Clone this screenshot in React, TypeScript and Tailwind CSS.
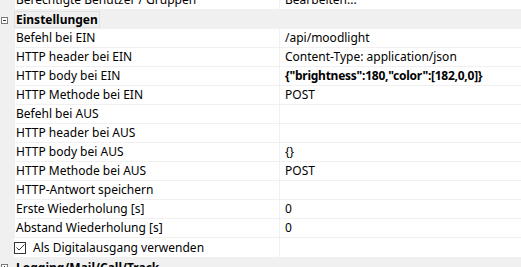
import React from "react";

type Row = { label: string; value?: string; bold?: boolean };

const rows: Row[] = [
  { label: "Befehl bei EIN", value: "/api/moodlight" },
  { label: "HTTP header bei EIN", value: "Content-Type: application/json" },
  { label: "HTTP body bei EIN", value: '{"brightness":180,"color":[182,0,0]}', bold: true },
  { label: "HTTP Methode bei EIN", value: "POST" },
  { label: "Befehl bei AUS" },
  { label: "HTTP header bei AUS" },
  { label: "HTTP body bei AUS", value: "{}" },
  { label: "HTTP Methode bei AUS", value: "POST" },
  { label: "HTTP-Antwort speichern" },
  { label: "Erste Wiederholung [s]", value: "0" },
  { label: "Abstand Wiederholung [s]", value: "0" },
];

const ExpandBox = ({ open }: { open: boolean }) => (
  <div className="relative w-[7px] h-[7px] border border-[#7a7a7a] bg-white">
    <div className="absolute left-[1px] top-[2px] w-[3px] h-px bg-[#333]" />
    {!open && <div className="absolute left-[2px] top-[1px] w-px h-[3px] bg-[#333]" />}
  </div>
);

const PropRow = ({ label, value, bold }: Row) => (
  <div className="flex h-[19px]">
    <div className="w-[15px] shrink-0 bg-[#f0f0f0]" />
    <div className="w-[265px] shrink-0 bg-white border-b border-r border-[#f0f0f0] pl-[1px] leading-[18px] whitespace-nowrap overflow-hidden">
      {label}
    </div>
    <div
      className={
        "flex-1 bg-white border-b border-[#f0f0f0] pl-[5px] leading-[18px] whitespace-nowrap overflow-hidden " +
        (bold ? "font-bold tracking-[-0.25px]" : "")
      }
    >
      {value}
    </div>
  </div>
);

export default function App() {
  return (
    <div
      className="w-[521px] h-[267px] overflow-hidden bg-[#f0f0f0] text-[12px] text-black"
      style={{ fontFamily: '"Segoe UI", "Noto Sans", sans-serif' }}
    >
      <div className="-mt-[9px]">
        <PropRow label="Berechtigte Benutzer / Gruppen" value="Bearbeiten..." />
      </div>
      <div className="flex items-center h-[19px] bg-[#f0f0f0]">
        <div className="w-[14px] shrink-0 pl-[1px] pt-[1px]">
          <ExpandBox open />
        </div>
        <div className="h-[17px] border border-[#e0e0e0] px-[1px] font-bold leading-[15px]">Einstellungen</div>
      </div>
      {rows.map((r) => (
        <PropRow key={r.label} {...r} />
      ))}
      <div className="flex h-[19px]">
        <div className="w-[14px] shrink-0 bg-[#f0f0f0]" />
        <div className="w-[266px] shrink-0 bg-white border-r border-[#f0f0f0] flex items-center">
          <div className="w-[12px] h-[12px] border border-[#333] flex items-center justify-center">
            <svg width="9" height="7" viewBox="0 0 9 7">
              <path d="M0.5 3.5 L3 6 L8.5 0.5" fill="none" stroke="#333" strokeWidth="1" />
            </svg>
          </div>
          <span className="ml-[7px] leading-[18px]">Als Digitalausgang verwenden</span>
        </div>
        <div className="flex-1 bg-white" />
      </div>
      <div className="flex items-center h-[19px] mt-px">
        <div className="w-[14px] shrink-0 pl-[1px]">
          <ExpandBox open={false} />
        </div>
        <div className="px-[2px] font-bold leading-[17px]">Logging/Mail/Call/Track</div>
      </div>
    </div>
  );
}
